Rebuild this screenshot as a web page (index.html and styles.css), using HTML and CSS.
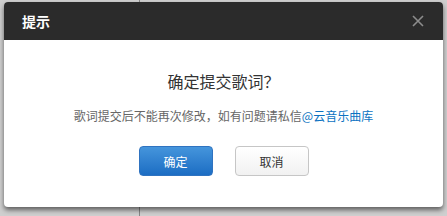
FILE: index.html
```html
<!DOCTYPE html>
<html lang="zh-CN">
<head>
    <meta charset="UTF-8">
    <title>提示</title>
    <link rel="stylesheet" href="styles.css">
</head>
<body>
    <div class="page-line"></div>
    <div class="dialog">
        <div class="dialog-head">
            <span class="dialog-title">提示</span>
            <svg class="close" width="12" height="12" viewBox="0 0 12 12">
                <path d="M1 1L11 11M11 1L1 11" stroke="#8c8c8c" stroke-width="1.6"/>
            </svg>
        </div>
        <div class="dialog-body">
            <h2 class="question">确定提交歌词？</h2>
            <p class="note">歌词提交后不能再次修改，如有问题请私信<a href="#">@云音乐曲库</a></p>
            <div class="actions">
                <button class="btn btn-ok">确定</button>
                <button class="btn btn-cancel">取消</button>
            </div>
        </div>
    </div>
</body>
</html>
```

FILE: styles.css
```css
body {
    margin: 0;
    width: 447px;
    height: 216px;
    overflow: hidden;
    position: relative;
    background-color: #cfcfcf;
    font-family: "Noto Sans CJK SC", "Microsoft YaHei", sans-serif;
}
.page-line {
    position: absolute;
    left: 139px;
    top: 0;
    width: 1px;
    height: 216px;
    background-color: #888;
}
.dialog {
    position: relative;
    margin: 2px 0 0 4px;
    width: 439px;
    height: 205px;
    background-color: white;
    border-radius: 4px;
    box-shadow: 0 3px 5px rgba(0, 0, 0, 0.55);
    overflow: hidden;
}
.dialog-head {
    height: 38px;
    background-color: #2b2b2b;
    display: flex;
    align-items: center;
    justify-content: space-between;
    padding: 0 19px 0 18px;
}
.dialog-title {
    color: white;
    font-size: 14px;
    font-weight: bold;
}
.close {
    display: block;
}
.dialog-body {
    display: flex;
    flex-direction: column;
    align-items: center;
    padding-top: 30px;
}
.question {
    margin: 0;
    font-size: 16px;
    font-weight: normal;
    line-height: 22px;
    color: #333;
}
.note {
    margin: 15px 0 0;
    font-size: 12px;
    line-height: 17px;
    color: #666;
}
.note a {
    color: #0c73c2;
    text-decoration: none;
}
.actions {
    display: flex;
    gap: 22px;
    margin-top: 22px;
}
.btn {
    width: 74px;
    height: 30px;
    border-radius: 4px;
    font-family: inherit;
    font-size: 12px;
    padding: 0;
    cursor: pointer;
}
.btn-ok {
    color: white;
    border: 1px solid #2f73c0;
    background: linear-gradient(#4595dc, #1c6dc3);
}
.btn-cancel {
    color: #333;
    border: 1px solid #c6c6c6;
    background: linear-gradient(#ffffff, #f1f1f1);
}
```
